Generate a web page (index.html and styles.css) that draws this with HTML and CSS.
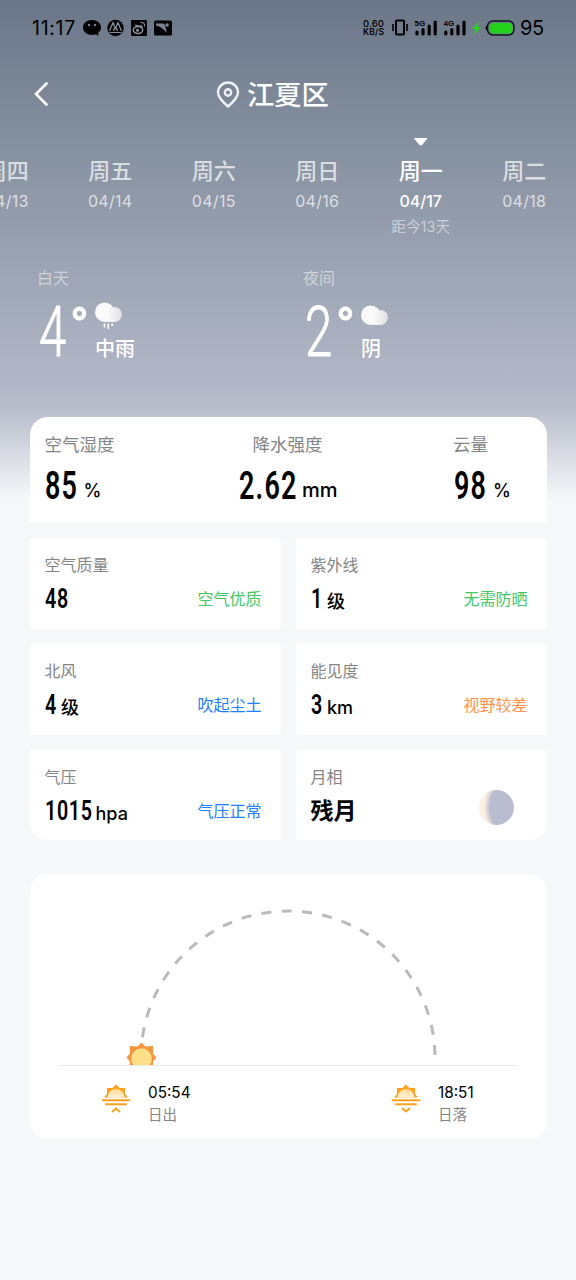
FILE: index.html
```html
<!DOCTYPE html>
<html lang="zh-CN">
<head>
<meta charset="utf-8">
<title>江夏区</title>
<link rel="stylesheet" href="styles.css">
</head>
<body>
<div class="status">
  <span class="clock">11:17</span>
  <svg class="notices" width="90" height="20" viewBox="0 0 90 20">
    <path d="M9 2C3.800 2 0 5.200 0 9.500S3.800 17 9 17c1.500 0 3-.3 4.200-.8L15.500 18l-.4-3C17 13.600 18 11.700 18 9.500 18 5.200 14.200 2 9 2z"/>
    <circle cx="6" cy="7" r="1.200" fill="#758292"/><circle cx="12" cy="7" r="1.200" fill="#758292"/>
    <circle cx="32.500" cy="10" r="8.200"/>
    <path d="M26.500 13l3.500-8.500 2.500 6 2.500-6 3.500 8.500M26.500 14.500h12M30.500 13l1-3M34.500 13l-1-3" fill="none" stroke="#8792a0" stroke-width="1.200"/>
    <rect x="48" y="2" width="16" height="16" rx="1"/>
    <ellipse cx="55" cy="12" rx="4.700" ry="3.500" fill="none" stroke="#8c97a4" stroke-width="1.500"/>
    <circle cx="54.500" cy="12.300" r="1.500" fill="#8c97a4"/>
    <path d="M52 7l4 1M57 7.500c2 0 2.500 1 2 2.500M57.500 4.500c3-.3 4.500 1.500 4 4" fill="none" stroke="#8c97a4" stroke-width="1.100"/>
    <rect x="71" y="2.500" width="18" height="15" rx="1.500"/>
    <path d="M73 5.500h7c2 0 2.500 4 4 9.500l-4-4c-2-2-4-3-7-3.500z" fill="#7b8796"/><circle cx="84" cy="7" r="1.800" fill="#7b8796"/>
  </svg>
  <span class="speed"><b>0.60</b><b>KB/S</b></span>
  <svg class="signals" width="128" height="20" viewBox="0 0 128 20">
    <rect x="4" y="2.500" width="8" height="14" rx="1" fill="none" stroke="#000" stroke-width="2"/>
    <path d="M1 6v7M15 6v7" stroke="#000" stroke-width="1.600"/>
    <g stroke="#000" stroke-width="3.200" stroke-linecap="round">
      <path d="M25 14v2M31 11.500V16M37.200 8v8M43.200 4v12M53.800 14v2M59.800 11.500V16M66 8v8M72 4v12"/>
    </g>
    <text x="22.500" y="7.500" class="net">5G</text><text x="51.500" y="7.500" class="net">4G</text>
    <path d="M87 3.500l-7 7.500h3.500l-1.500 6 7-8h-4z" fill="#24d11b"/>
    <rect x="95.500" y="3" width="26.500" height="14" rx="5.500" fill="none" stroke="#111a20" stroke-width="1.500"/>
    <path d="M95 7.500c-2 1-2 4 0 5z"/>
    <rect x="98" y="5" width="22.500" height="10.500" rx="3.500" fill="#24d11b"/>
  </svg>
  <span class="battery">95</span>
</div>

<header class="header">
  <svg class="back" width="16" height="26" viewBox="0 0 16 26"><path d="M13.500 2.500L3 13 13.500 23.500" fill="none" stroke="#fff" stroke-width="2.600" stroke-linecap="round"/></svg>
  <svg class="pin" width="24" height="28" viewBox="0 0 24 28"><g fill="none" stroke="#eef0f3" stroke-width="2.400"><path d="M12 25.500C7 21 2 16.500 2 11.500a10 10 0 0 1 20 0C22 16.500 17 21 12 25.500z" stroke-linejoin="round"/><circle cx="12" cy="11.500" r="3.200"/></g></svg>
  <h1 class="city">江夏区</h1>
</header>

<nav class="days">
  <div class="day"><span class="week">周四</span><span class="date">04/13</span></div>
  <div class="day"><span class="week">周五</span><span class="date">04/14</span></div>
  <div class="day"><span class="week">周六</span><span class="date">04/15</span></div>
  <div class="day"><span class="week">周日</span><span class="date">04/16</span></div>
  <div class="day active"><span class="week">周一</span><span class="date">04/17</span><span class="away">距今13天</span></div>
  <div class="day"><span class="week">周二</span><span class="date">04/18</span></div>
</nav>

<section class="temps">
  <div class="temp">
    <div class="part">白天</div>
    <div class="reading">
      <span class="degree">4</span><span class="ring">°</span>
      <div class="sky">
        <svg width="30" height="32" viewBox="0 0 30 32">
          <defs><linearGradient id="cloud" x1="0" x2="1"><stop offset="0" stop-color="#fafafa"/><stop offset=".3" stop-color="#f3f3f4"/><stop offset="1" stop-color="#dedfe1"/></linearGradient></defs>
          <circle cx="10.700" cy="10.200" r="9.700" fill="#fafafa"/>
          <path d="M10 12h10v7.900H10z" fill="#fafafa"/>
          <rect x="13" y="4.900" width="15" height="15" rx="7.500" fill="url(#cloud)"/>
          <path d="M10.500 21.500v4M14.300 21.500v5.500M18.200 21.500v2.500" stroke="#fff" stroke-width="1.700"/>
        </svg>
        <span>中雨</span>
      </div>
    </div>
  </div>
  <div class="temp">
    <div class="part">夜间</div>
    <div class="reading">
      <span class="degree">2</span><span class="ring">°</span>
      <div class="sky">
        <svg width="30" height="32" viewBox="0 0 30 32">
          <circle cx="10.700" cy="13.200" r="9.700" fill="#fafafa"/>
          <path d="M10 15h10v7.900H10z" fill="#fafafa"/>
          <rect x="13" y="7.900" width="15" height="15" rx="7.500" fill="url(#cloud)"/>
        </svg>
        <span>阴</span>
      </div>
    </div>
  </div>
</section>

<main class="cards">
  <section class="summary">
    <div class="metric"><span class="label">空气湿度</span><div class="value"><span class="num n2">85</span><span class="unit">%</span></div></div>
    <div class="metric rain"><span class="label">降水强度</span><div class="value"><span class="num n4">2.62</span><span class="unit">mm</span></div></div>
    <div class="metric cover"><span class="label">云量</span><div class="value"><span class="num n2">98</span><span class="unit">%</span></div></div>
  </section>
  <section class="grid">
    <div class="tile"><span class="label">空气质量</span><div class="value"><span class="num n2">48</span><span class="tip good">空气优质</span></div></div>
    <div class="tile"><span class="label">紫外线</span><div class="value"><span class="num n1">1</span><span class="unit cjk">级</span><span class="tip good">无需防晒</span></div></div>
    <div class="tile"><span class="label">北风</span><div class="value"><span class="num n1">4</span><span class="unit cjk">级</span><span class="tip info">吹起尘土</span></div></div>
    <div class="tile"><span class="label">能见度</span><div class="value"><span class="num n1">3</span><span class="unit">km</span><span class="tip warn">视野较差</span></div></div>
    <div class="tile pressure"><span class="label">气压</span><div class="value"><span class="num n4">1015</span><span class="unit">hpa</span><span class="tip info">气压正常</span></div></div>
    <div class="tile moon"><span class="label">月相</span><div class="value"><span class="phase">残月</span><span class="disc"></span></div></div>
  </section>
  <section class="sun">
    <svg class="arc" width="458" height="191" viewBox="0 0 458 191">
      <path d="M376 184A147 147 0 0 0 82 184" fill="none" stroke="#bababa" stroke-width="3" stroke-dasharray="10 10.370" stroke-dashoffset="-3"/>
      <path d="M82.500 168.500l4 4 7.500-.5v7.500l3.500 4-3.500 4V191H71v-3.500l-3.500-4 3.500-4V172l7.500.5z" fill="#f5963d"/>
      <path d="M74.500 191a10.300 10.300 0 1 1 16 0z" fill="#ffe08a"/>
    </svg>
    <div class="times">
      <div class="time">
        <svg width="30" height="30" viewBox="0 0 30 30">
          <defs><linearGradient id="glow" x1="0" y1="0" x2="0" y2="1"><stop offset="0" stop-color="#ffd98e"/><stop offset="1" stop-color="#fff3dc"/></linearGradient></defs>
          <path d="M3 14.500l3-3.500V5h5.500L15 1.500 18.500 5H24v6l3 3.500z" fill="#ff9f1c"/>
          <path d="M6.500 14.500a8.500 8.500 0 0 1 17 0z" fill="url(#glow)"/>
          <path d="M1.500 17.300h27M5 21.200h20M11.500 28.500l3.500-3 3.500 3" fill="none" stroke="#ff9f1c" stroke-width="1.900" stroke-linecap="round"/>
        </svg>
        <div class="when"><b>05:54</b><span>日出</span></div>
      </div>
      <div class="time">
        <svg width="30" height="30" viewBox="0 0 30 30">
          <path d="M3 14.500l3-3.500V5h5.500L15 1.500 18.500 5H24v6l3 3.500z" fill="#ff9f1c"/>
          <path d="M6.500 14.500a8.500 8.500 0 0 1 17 0z" fill="url(#glow)"/>
          <path d="M1.500 17.300h27M5 21.200h20M11.500 25.500l3.500 3 3.500-3" fill="none" stroke="#ff9f1c" stroke-width="1.900" stroke-linecap="round"/>
        </svg>
        <div class="when"><b>18:51</b><span>日落</span></div>
      </div>
    </div>
  </section>
</main>
</body>
</html>
```
FILE: styles.css
```css
* { box-sizing: border-box; }
body {
  margin: 0;
  width: 576px;
  height: 1280px;
  overflow: hidden;
  font-family: Inter, "Noto Sans CJK SC", sans-serif;
  background: linear-gradient(#6b7788 0, #838f9e 135px, #969eae 230px, #b1b7c6 385px, #b8bdcb 408px, #f7f8fa 500px, #f7f8fa 100%);
}
svg { display: block; flex: none; }

.status { display: flex; align-items: center; height: 56px; padding-left: 32px; color: #000; }
.clock { width: 51px; font: 400 19.5px/20px Inter, sans-serif; letter-spacing: .7px; }
.speed { display: flex; flex-direction: column; width: 22px; margin: 0 7px 0 190px; }
.speed b { font: 450 9.5px/9px Inter, sans-serif; letter-spacing: .1px; }
.speed b + b { font-size: 8.500px; font-weight: 600; letter-spacing: .2px; }
.net { font: 700 8px "Liberation Sans", sans-serif; }
.battery { font: 400 20px/20px Inter, sans-serif; letter-spacing: -.4px; }

.header { display: flex; align-items: center; height: 76px; padding-left: 33px; color: #fff; }
.pin { margin: 1px 7px 0 167px; }
.city { margin: 3px 0 0; font-size: 27.300px; font-weight: 500; line-height: 40px; }

.days { display: flex; justify-content: flex-end; width: 576px; height: 132px; overflow: hidden; color: rgba(255,255,255,.7); }
.day { display: flex; flex-direction: column; align-items: center; flex: 0 0 103.500px; padding-top: 6px; }
.day:last-child { flex-basis: 103.500px; }
.day::before { content: ""; width: 14px; height: 8px; clip-path: polygon(0 0, 100% 0, 58% 92%, 42% 92%); }
.active { color: #fff; font-weight: 500; }
.active::before { background: #fff; }
.week { margin-top: 9px; font-size: 22px; line-height: 32px; font-weight: 500; }
.date { margin-top: 4px; font-size: 16px; line-height: 20px; letter-spacing: .3px; }
.active .date { letter-spacing: 0; }
.away { margin-top: 6px; font-size: 14.700px; line-height: 20px; font-weight: 400; color: rgba(255,255,255,.5); }

.temps { display: flex; height: 152.500px; padding-left: 37px; color: #fff; }
.temp { width: 266px; }
.part { font-size: 16px; line-height: 28px; color: rgba(255,255,255,.5); }
.reading { display: flex; margin-top: 4px; }
.degree { width: 31px; margin-left: 2px; font: 300 70px/72px Roboto, sans-serif; transform: scaleX(.7); transform-origin: 0 0; -webkit-text-stroke: 1.100px #fff; }
.ring { width: 24px; font: 600 49px/59px Roboto, sans-serif; -webkit-text-stroke: .8px #fff; }
.sky { display: flex; flex-direction: column; }
.sky span { margin: 0 0 0 1px; font-size: 20px; line-height: 30px; font-weight: 500; }
.sky svg { margin-top: 6px; }

.cards { padding: 0 29.500px; }
.label { display: block; color: #858585; font-size: 16px; line-height: 24px; }
.value { display: flex; align-items: baseline; color: #000; }
.num { font: 600 28.500px/34px Roboto, sans-serif; letter-spacing: 1px; transform: scaleX(.69); transform-origin: 0 0; white-space: nowrap; }
.unit { font-size: 18px; font-weight: 450; }
.unit.cjk { font-weight: 500; }

.summary { display: grid; grid-template-columns: 194.500px 214px auto; height: 106px; padding: 16px 15px; background: #fff; border-radius: 18px 18px 3px 3px; }
.summary .label { font-size: 17.500px; }
.summary .value { margin-top: 6px; }
.summary .num { font-size: 39px; line-height: 46px; letter-spacing: 1.800px; }
.summary .num.n2 { width: 39px; }
.summary .num.n4 { width: 63px; }
.summary .unit { font-size: 20px; position: relative; top: -2px; }
.summary .n2 + .unit { font-size: 18px; font-weight: 500; }
.rain .label { margin-left: 13.500px; }
.cover .num { margin-left: 1px; }

.grid { display: grid; grid-template-columns: 251px 251px; grid-template-rows: 91px 91px 90px; gap: 15px; margin-top: 15.500px; }
.tile { padding: 15px 19px 0 15px; background: #fff; border-radius: 3px; }
.tile .value { margin-top: 5px; }
.tile .num.n1 { width: 16.500px; }
.tile .num.n4 { width: 51px; }
.tile .tip { margin-left: auto; font-size: 16px; line-height: 24px; align-self: center; }
.tile .tip.good { color: #44c764; }
.tile .tip.info { color: #2080ff; }
.tile .tip.warn { color: #ff924d; }
.tile.pressure { border-bottom-left-radius: 18px; }
.tile.moon { border-bottom-right-radius: 18px; }
.phase { font-size: 23px; font-weight: 700; line-height: 34px; }
.disc { width: 35px; height: 35px; margin: -7px 13.500px 0 auto; align-self: center; border-radius: 50%; background: radial-gradient(ellipse 29px 35px at 33px 50%, #b9bdcf 0, #b9bdcf 76%, #fbefdf 96%); }

.sun { height: 265px; margin-top: 34px; padding-left: 29.500px; background: #fff; border-radius: 18px; }
.arc { border-bottom: 1.500px solid #e9e9e9; box-sizing: content-box; }
.times { display: flex; gap: 161px; padding: 17px 0 0 42px; }
.time { display: flex; width: 129px; flex: none; }
.when { display: flex; flex-direction: column; margin-left: 17px; }
.when b { font-size: 15.300px; font-weight: 420; line-height: 20px; }
.when span { margin-top: 1px; font-size: 14.500px; line-height: 22px; color: #858585; }
```
